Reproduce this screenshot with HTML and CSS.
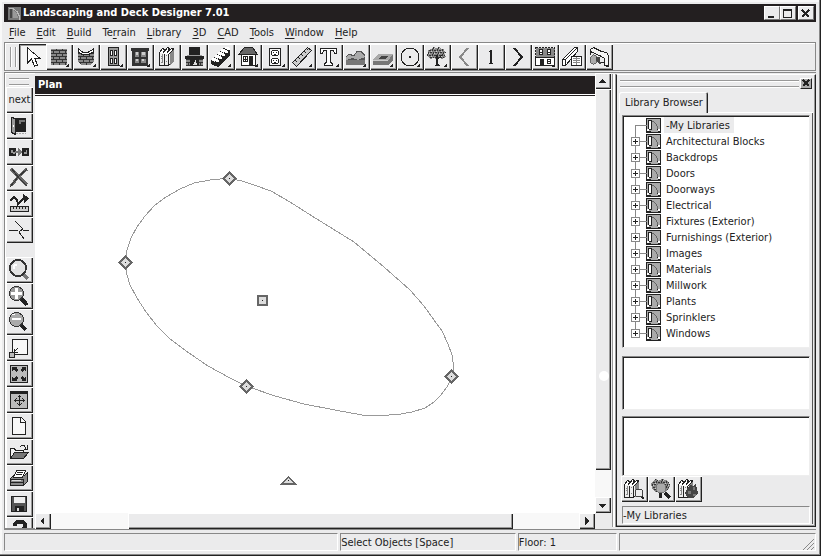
FILE: index.html
```html
<!DOCTYPE html>
<html lang="en">
<head>
<meta charset="utf-8">
<title>Landscaping and Deck Designer 7.01</title>
<link rel="stylesheet" href="styles.css">
</head>
<body>
<svg class="defs" aria-hidden="true">
  <defs>
    <pattern id="brick" width="6" height="6" patternUnits="userSpaceOnUse"><path fill="#888" d="M0 0h6v6H0z"/><path fill="#333" d="M0 0h6v1H0zM0 3h6v1H0zM1 0h1v3H1zM4 3h1v3H4z"/></pattern>
    <pattern id="leaf" width="5" height="5" patternUnits="userSpaceOnUse"><path fill="#888" d="M0 0h5v5H0z"/><path fill="#333" d="M0 1h2v1H0zM3 0h1v2H3zM1 3h2v1H1zM4 3h1v2H4z"/><path fill="#ccc" d="M2 2h1v1H2zM0 4h1v1H0z"/></pattern>
    <symbol id="corner" viewBox="0 0 27 26"><path fill="#222" d="M23 20v3h-3v-1h1v-1h1v-1z"/></symbol>
    <symbol id="lib" viewBox="0 0 15 15">
      <path fill="#222" d="M0 0h15v15H0z"/><path fill="#aaa" d="M1 1h13v13H1z"/>
      <path fill="#222" d="M2 2h4v10H2z"/><path fill="#fff" d="M3 3h2v8H3z"/>
      <path fill="#666" d="M6 3h2v1H6zM8 4h1v1H8zM9 5h1v1H9zM10 6h1v2h-1zM11 8h1v3h-1z"/>
      <path fill="#fff" d="M1 11h2v2H1zM12 11h2v2h-2z"/><path fill="#222" d="M1 13h4v1H1zM11 11h1v3h3v-1h-3z"/>
    </symbol>
    <symbol id="books" viewBox="0 0 27 26">
      <path fill="#eee" stroke="#222" d="M5.500 8.500h5v13h-5zM10.500 8.500h4v13h-4zM14.500 9.500l5-5v12l-5 5z"/>
      <path fill="#888" d="M16 9l4-4v12l-4 4z"/><path fill="#fff" stroke="#222" d="M5.500 8.500l3-4 2 1-1 3 4-5 2 1-2 4 4-4 2 1-5 5"/>
      <path stroke="#888" d="M7 12.500h2M7 14.500h2M7 18.500h2M12 11.500h1M12 17.500h1M8.500 10v9"/>
    </symbol>
  </defs>
</svg>

<div class="window">
  <header class="titlebar">
    <svg class="app-icon" width="13" height="13" viewBox="0 0 13 13"><path fill="#777" d="M0 0h13v13H0z"/><path fill="#444" d="M2 2h2v9H2z"/><path fill="none" stroke="#bbb" d="M1 1.500h4l4 3 2 4v4"/><path fill="#999" d="M5 3l4 3 1 5H5z"/></svg>
    <h1>Landscaping and Deck Designer 7.01</h1>
    <div class="captions">
      <button type="button" aria-label="Minimize"><svg width="15" height="13"><path fill="#222" d="M4 9h6v2H4z"/></svg></button>
      <button type="button" aria-label="Maximize"><svg width="15" height="13"><path fill="none" stroke="#222" d="M3.500 2.500h8v8h-8zM3 3.500h9"/></svg></button>
      <button type="button" class="close" aria-label="Close"><svg width="15" height="13"><path stroke="#222" stroke-width="2" d="M4 3l7 7M11 3l-7 7"/></svg></button>
    </div>
  </header>

  <nav class="menubar">
    <button type="button"><u>F</u>ile</button><button type="button"><u>E</u>dit</button><button type="button"><u>B</u>uild</button><button type="button">Te<u>r</u>rain</button><button type="button"><u>L</u>ibrary</button><button type="button"><u>3</u>D</button><button type="button"><u>C</u>AD</button><button type="button"><u>T</u>ools</button><button type="button"><u>W</u>indow</button><button type="button"><u>H</u>elp</button>
  </nav>

  <div class="toolbar">
    <span class="grip-v"></span>
    <button type="button" class="pressed" aria-label="Select Objects"><svg width="27" height="26"><path fill="#fff" stroke="#222" d="M8.500 4v15l4-4 3 7 3-1-3-7h5z"/></svg></button>
    <button type="button" aria-label="Wall"><svg width="27" height="26"><path fill="url(#brick)" d="M5 5h16v16H5z"/><use href="#corner"/></svg></button>
    <button type="button" aria-label="Curved Wall"><svg width="27" height="26"><path fill="url(#brick)" d="M5 8l4 2h7l5-3v11l-4 3h-8l-4-3z"/><path fill="#fff" stroke="#222" d="M5.500 5l4 3h6l5-3v3l-4 2h-8l-3-2z"/><use href="#corner"/></svg></button>
    <button type="button" aria-label="Door"><svg width="27" height="26"><path fill="#999" stroke="#222" d="M8.500 3.500h10v18h-10z"/><path fill="#fff" stroke="#222" d="M10.500 6.500h2v5h-2zM14.500 6.500h2v5h-2zM10.500 14.500h2v5h-2zM14.500 14.500h2v5h-2z"/><path fill="#222" d="M8 21h12v1H8z"/><use href="#corner"/></svg></button>
    <button type="button" aria-label="Window"><svg width="27" height="26"><path fill="#333" d="M4 4h18v3H4zM5 7h16v15H5z"/><path fill="#888" d="M8 8h4v5H8zM14 8h5v5h-5zM8 15h4v4H8zM14 15h5v4h-5z"/><path fill="#ccc" d="M9 8h2v3H9zM15 8h3v3h-3zM9 15h2v2H9zM15 15h2v2h-2z"/><use href="#corner"/></svg></button>
    <button type="button" aria-label="Cabinet"><svg width="27" height="26"><use href="#books"/></svg></button>
    <button type="button" aria-label="Fireplace"><svg width="27" height="26"><path fill="#222" d="M8 3h11v8H8z"/><path fill="#999" d="M6 11h15v1H6z"/><path fill="#222" d="M4 12h19v3H4z"/><path fill="url(#brick)" d="M5 15h17v7H5z"/><path fill="#222" d="M9 22v-7h9v7z"/><path fill="#ddd" d="M12 20h1v-2h1v-2h1v3h1v2h-4z"/></svg></button>
    <button type="button" aria-label="Stairs"><svg width="27" height="26"><path fill="#222" d="M3 16l7 3v4l-7-3zM10 19l3-2v3l-3 3zM6 13l7 3v4l-7-3zM13 16l3-2v3l-3 3zM9 10l7 3v4l-7-3zM16 13l3-2v3l-3 3zM12 7l7 3v4l-7-3zM19 10l3-2v3l-3 3zM15 4l7 2v5l-7-3z"/><path fill="#fff" d="M4 14h3l4 2v2H9l-5-2zM7 11h3l4 2v2h-2l-5-2zM10 8h3l4 2v2h-2l-5-2zM13 5h3l4 2v2h-2l-5-2zM17 3h3l2 1v2h-2l-3-1z"/><use href="#corner"/></svg></button>
    <button type="button" aria-label="Roof"><svg width="27" height="26"><path fill="#666" stroke="#222" d="M3.500 10.500l6-7h8l5 7z"/><path fill="#fff" stroke="#222" d="M6.500 10.500h14v11h-14zM8.500 12.500h4v5h-4zM10.500 12v6M8 15.500h5"/><path fill="#222" d="M14 12h4v10h-4z"/><use href="#corner"/></svg></button>
    <button type="button" aria-label="Electrical"><svg width="27" height="26"><path fill="#f4f4f4" stroke="#222" d="M7.500 4.500h11v17h-11z"/><rect x="9.500" y="6.500" width="7" height="5" rx="2" fill="#fff" stroke="#222"/><rect x="9.500" y="14.500" width="7" height="5" rx="2" fill="#fff" stroke="#222"/><path stroke="#222" d="M11.500 8v1M14.500 8v1M12 10.500h2M11.500 16v1M14.500 16v1M12 18.500h2"/><use href="#corner"/></svg></button>
    <button type="button" aria-label="Dimension"><svg width="27" height="26"><path fill="#ccc" stroke="#222" d="M3.500 18.500l15-15 4 3-15 16z"/><path stroke="#222" d="M6 16l2 2M9 13l2 2M12 10l2 2M15 7l2 2M18 5l1 1"/><use href="#corner"/></svg></button>
    <button type="button" aria-label="Text"><svg width="27" height="26"><path fill="#fff" stroke="#222" d="M4.500 4.500h16v5h-2l-1-3h-3v12l2 1v2h-8v-2l2-1v-12h-3l-1 3h-2z"/><use href="#corner"/></svg></button>
    <button type="button" aria-label="Terrain"><svg width="27" height="26"><path fill="#aaa" d="M3 12l3-2 5 1 3-4h4l3 3 1 2v9H3z"/><path fill="#555" d="M3 16l7-2 5 2 7-3v3H3z"/><path fill="#777" d="M3 16h19v5H3z"/><path fill="none" stroke="#555" d="M3 12.500l3-2 5 1 3-4h4l4 4"/><use href="#corner"/></svg></button>
    <button type="button" aria-label="Garden"><svg width="27" height="26"><path fill="#aaa" d="M3 15l6-5h14l-5 7H3z"/><path fill="#777" d="M3 17h15l5-7v6l-5 5H3z"/><path fill="#444" d="M8 15l3-3h7l-2 3z"/><path fill="#ccc" d="M3 16h15v1H3z"/><use href="#corner"/></svg></button>
    <button type="button" aria-label="Circle"><svg width="27" height="26"><circle cx="13" cy="13" r="9" fill="none" stroke="#222"/><path fill="#222" d="M12 12h2v2h-2z"/><use href="#corner"/></svg></button>
    <button type="button" aria-label="Plant"><svg width="27" height="26"><path fill="url(#leaf)" d="M4 6l3-1 2-2 3 1 3-1 2 2 3 0 0 2 2 1-1 3 1 2-4 2-3-1-3 1-3-1-3 1-2-3-2-1 2-2z"/><path fill="#222" d="M8 12l4 3v-4h2v3l3-3h1l-4 5v4l2 2h-6l2-2v-4z"/><use href="#corner"/></svg></button>
    <button type="button" aria-label="Down one floor"><svg width="27" height="26"><path fill="none" stroke="#888" stroke-width="2" d="M17 4l-8 9 8 9"/></svg></button>
    <button type="button" aria-label="Floor 1"><svg width="27" height="26"><path fill="#222" d="M11 7h1V6h2v13h1v1h-4v-1h1V8h-1z"/></svg></button>
    <button type="button" aria-label="Up one floor"><svg width="27" height="26"><path fill="none" stroke="#222" stroke-width="2" d="M9 4l8 9-8 9"/></svg></button>
    <button type="button" aria-label="Reference floor"><svg width="27" height="26"><path fill="#888" stroke="#222" stroke-dasharray="2 1" d="M3.500 3.500h19v10h-19z"/><path fill="#fff" stroke="#222" d="M3.500 13.500h19v8h-19zM7.500 5.500h3v5h-3zM15.500 5.500h3v5h-3zM15.500 15.500h3v4h-3zM7 8.500h4M15 8.500h4M15 17.500h4"/><path fill="#222" d="M8 15h4v7H8z"/><use href="#corner"/></svg></button>
    <button type="button" aria-label="Materials list"><svg width="27" height="26"><path fill="#fff" stroke="#222" d="M3.500 15.500l12-12h3v4l-12 14h-3zM3.500 15.500h3v6M6.500 15.500l12-12"/><path fill="#fff" stroke="#222" d="M12.500 12.500h10v9h-10z"/><path stroke="#888" d="M14 14.500h7M14 16.500h7M14 18.500h7M17.500 13v8"/></svg></button>
    <button type="button" aria-label="Camera"><svg width="27" height="26"><path fill="#f4f4f4" stroke="#222" d="M4.500 10.500v-5l3-2 8 4 5 1 2 3v10h-4v-7l-3-2-11-5"/><path fill="#aaa" stroke="#666" d="M4.500 13.500l3-3 3 2v6l-3 2-3-2z"/><path fill="#444" d="M10 13h4v3l1 4h-2l-3-3z"/><path stroke="#222" d="M15 18.500h3"/><use href="#corner"/></svg></button>
  </div>

  <main class="workspace">
    <aside class="sidebar" aria-label="Edit tools">
      <span class="grip-h"></span>
      <button type="button" class="word">next</button>
      <button type="button" aria-label="Open object"><svg width="26" height="26"><path fill="#222" d="M8 5h12v14H8z"/><path fill="#777" d="M13 7h6v2h-6zM13 9h2v2h-2z"/><path fill="#999" stroke="#222" d="M5.500 4.500l4 1v16l-4-2z"/><path stroke="#aaa" stroke-dasharray="2 1" d="M10 20.500h10"/><path fill="#fff" d="M7 12h1v2H7z"/></svg></button>
      <button type="button" aria-label="Replace"><svg width="26" height="26"><path fill="#222" d="M3 9h7v8H3zM16 9h7v8h-7z"/><path fill="#999" d="M5 11h2v3H5zM7 13h2v2H7zM18 13h2v2h-2zM20 11h1v4h-1z"/><path fill="#777" d="M9 12h3V9l5 4-5 4v-3H9z"/></svg></button>
      <button type="button" aria-label="Delete"><svg width="26" height="26"><path fill="none" stroke="#666" stroke-width="3" d="M5 4l6 6 10 10M21 4l-9 8-7 9"/><path fill="none" stroke="#333" d="M6 4l6 8 9 9M21 4l-9 8-8 10"/></svg></button>
      <button type="button" aria-label="Dimension edit"><svg width="26" height="26"><path fill="none" stroke="#222" stroke-width="2" d="M4 10l4-4 3 3 1 4 6-6"/><path fill="#222" d="M17 3l6 4-5 5z"/><path fill="#ccc" stroke="#222" d="M4.500 15.500h18v5h-18z"/><path stroke="#222" d="M7.500 16v2M10.500 16v2M13.500 16v2M16.500 16v2M19.500 16v2"/></svg></button>
      <button type="button" aria-label="Break line"><svg width="26" height="26"><path fill="none" stroke="#222" d="M9 4l8 8-4 3 5 7M3 13.500h9M17 13.500h6"/></svg></button>
      <span class="spacer"></span>
      <button type="button" aria-label="Zoom"><svg width="26" height="26"><path stroke="#777" stroke-width="4" d="M18 18l4 4"/><circle cx="12" cy="11" r="8" fill="#e2e2e2" stroke="#333" stroke-width="2"/><path fill="#fff" d="M8 7h3v2H9v3H7V8z"/></svg></button>
      <button type="button" aria-label="Zoom in"><svg width="26" height="26"><path stroke="#222" stroke-width="4" d="M15 15l6 7"/><circle cx="10.500" cy="10.500" r="7" fill="#999" stroke="#333"/><path fill="#fff" d="M9 5h3v4h4v3h-4v4H9v-4H5V9h4z"/></svg></button>
      <button type="button" aria-label="Zoom out"><svg width="26" height="26"><path stroke="#222" stroke-width="4" d="M14 15l6 6"/><circle cx="10.500" cy="10.500" r="7" fill="#aaa" stroke="#333"/><path fill="#fff" d="M6 9h9v2H6zM6 5h3v1H6z"/></svg></button>
      <button type="button" aria-label="Undo zoom"><svg width="26" height="26"><path fill="#f8f8f8" stroke="#222" d="M6.500 4.500h15v15h-15z"/><path fill="#bbb" stroke="#222" d="M3.500 17.500h5v5h-5z"/><path fill="none" stroke="#222" d="M12 13l-4 4M8.500 14v3.500h3"/></svg></button>
      <button type="button" aria-label="Fill window"><svg width="26" height="26"><path fill="#bbb" stroke="#222" d="M4.500 4.500h17v17h-17z"/><path fill="#222" d="M6 6h5l-1 1 2 2-2 2-2-2-2 1zM20 6h-5l1 1-2 2 2 2 2-2 2 1zM6 20h5l-1-1 2-2-2-2-2 2-2-1zM20 20h-5l1-1-2-2 2-2 2 2 2-1z"/></svg></button>
      <button type="button" aria-label="Pan window"><svg width="26" height="26"><path fill="#bbb" stroke="#222" d="M4.500 4.500h17v17h-17z"/><path fill="#222" d="M4 4h18v3H4z"/><path fill="none" stroke="#222" d="M13.500 8v11M8 13.500h11M11.500 10.500l2-2 2 2M11.500 16.500l2 2 2-2M10.500 11.500l-2 2 2 2M16.500 11.500l2 2-2 2"/></svg></button>
      <button type="button" aria-label="New"><svg width="26" height="26"><path fill="#f8f8f8" stroke="#222" d="M6.500 4.500h9l4 4v13h-13z"/><path fill="none" stroke="#222" d="M14.500 4v5h5"/></svg></button>
      <button type="button" aria-label="Open"><svg width="26" height="26"><path fill="#f4f4f4" stroke="#222" d="M4.500 19.500v-10h4l1 2h8v3"/><path fill="#777" stroke="#222" d="M4.500 19.500l4-6h14l-5 6z"/><path fill="none" stroke="#222" d="M14 7.500l2-1h2l2 3M21.500 6v4h-4"/></svg></button>
      <button type="button" aria-label="Print"><svg width="26" height="26"><path fill="#888" stroke="#222" d="M4.500 13.500l3-3h11l3-3v9l-4 4h-13z"/><path fill="#fff" stroke="#222" d="M7.500 12.500l3-7h9l-3 7z"/><path stroke="#222" d="M11 7.500h6M10 9.500h6M4 14.500h14M4 17.500h14M17.500 14v6"/><path fill="#ddd" d="M6 15h9v1H6z"/></svg></button>
      <button type="button" aria-label="Save"><svg width="26" height="26"><path fill="#555" stroke="#222" d="M5.500 5.500h15v15h-15z"/><path fill="#eee" d="M8 6h11v6H8z"/><path fill="#222" d="M9 15h9v6H9z"/><path fill="#ddd" d="M11 17h2v3h-2z"/></svg></button>
      <button type="button" aria-label="Help"><svg width="26" height="26"><path fill="none" stroke="#222" stroke-width="4" d="M9 9V7l2-2h6l2 2v4l-5 4v2"/></svg></button>
    </aside>

    <section class="plan">
      <h2>Plan</h2>
      <div class="canvas">
        <svg width="560" height="418" viewBox="35 96 560 418" role="img" aria-label="Plan outline">
          <path fill="none" stroke="#999" d="M229.500 178.500L242 181L254 185L271 191L290 202L312 216L354 242L384 267L410 290L424 306L434 320L442 331L448 344L452 355L453.500 366L453.500 374L447 387L440 396L434 402L425 408L412 412L398 414.500L380 415.500L365 415.500L340 411L304 404L275 396L246 386L230 378L208 366L189 353L170 339L157 326L146 312L137 298L130 285L127 275L125.500 262L127 250L131 238L137 227L145 216L154 206L166 197L180 189L194 183L210 180L220 179z"/>
          <g fill="#ddd" stroke="#666" stroke-width="2">
            <path d="M229.500 172.500l6 6-6 6-6-6zM125.500 256.500l6 6-6 6-6-6zM451.500 370.500l6 6-6 6-6-6zM246.500 380.500l6 6-6 6-6-6zM258 296h9v9h-9zM288.500 477l7 7h-14z"/>
          </g>
          <path fill="#222" d="M229 178h1v1h-1zM125 262h1v1h-1zM451 376h1v1h-1zM246 386h1v1h-1zM262 300h1v1h-1zM288 480h1v1h-1z"/>
        </svg>
      </div>
      <div class="hscroll">
        <button type="button" aria-label="Scroll left"><svg width="15" height="15"><path fill="#222" d="M9 3v8L5 7z"/></svg></button>
        <div class="track"><div class="thumb"></div></div>
        <button type="button" aria-label="Scroll right"><svg width="15" height="15"><path fill="#222" d="M6 3v8l4-4z"/></svg></button>
      </div>
    </section>

    <div class="vscroll">
      <button type="button" aria-label="Scroll up"><svg width="15" height="15"><path fill="#222" d="M3 9h8L7 5z"/></svg></button>
      <div class="track"><div class="thumb"></div></div>
      <button type="button" aria-label="Scroll down"><svg width="15" height="15"><path fill="#222" d="M3 6h8l-4 4z"/></svg></button>
    </div>

    <aside class="library">
      <div class="dock-head"><span class="grip-h"></span><button type="button" aria-label="Close library"><svg width="9" height="9"><path stroke="#222" stroke-width="2" d="M2 1l6 6M8 1L2 7"/></svg></button></div>
      <div class="tabs"><button type="button" class="tab">Library Browser</button><span class="tab-rest"></span></div>
      <div class="pane">
        <ul class="tree">
          <li class="root"><svg width="15" height="15"><use href="#lib"/></svg><span class="selected">-My Libraries</span></li>
          <li><button type="button" aria-label="Expand"></button><svg width="15" height="15"><use href="#lib"/></svg><span>Architectural Blocks</span></li>
          <li><button type="button" aria-label="Expand"></button><svg width="15" height="15"><use href="#lib"/></svg><span>Backdrops</span></li>
          <li><button type="button" aria-label="Expand"></button><svg width="15" height="15"><use href="#lib"/></svg><span>Doors</span></li>
          <li><button type="button" aria-label="Expand"></button><svg width="15" height="15"><use href="#lib"/></svg><span>Doorways</span></li>
          <li><button type="button" aria-label="Expand"></button><svg width="15" height="15"><use href="#lib"/></svg><span>Electrical</span></li>
          <li><button type="button" aria-label="Expand"></button><svg width="15" height="15"><use href="#lib"/></svg><span>Fixtures (Exterior)</span></li>
          <li><button type="button" aria-label="Expand"></button><svg width="15" height="15"><use href="#lib"/></svg><span>Furnishings (Exterior)</span></li>
          <li><button type="button" aria-label="Expand"></button><svg width="15" height="15"><use href="#lib"/></svg><span>Images</span></li>
          <li><button type="button" aria-label="Expand"></button><svg width="15" height="15"><use href="#lib"/></svg><span>Materials</span></li>
          <li><button type="button" aria-label="Expand"></button><svg width="15" height="15"><use href="#lib"/></svg><span>Millwork</span></li>
          <li><button type="button" aria-label="Expand"></button><svg width="15" height="15"><use href="#lib"/></svg><span>Plants</span></li>
          <li><button type="button" aria-label="Expand"></button><svg width="15" height="15"><use href="#lib"/></svg><span>Sprinklers</span></li>
          <li><button type="button" aria-label="Expand"></button><svg width="15" height="15"><use href="#lib"/></svg><span>Windows</span></li>
        </ul>
        <div class="preview"></div>
        <div class="preview tall"></div>
        <div class="lib-buttons">
          <button type="button" aria-label="Search library"><svg width="27" height="26"><g transform="translate(-2 0)"><use href="#books"/></g><path stroke="#222" stroke-width="2" d="M19 19l4 4"/><circle cx="18" cy="17" r="4" fill="#eee" stroke="#444"/></svg></button>
          <button type="button" aria-label="Plant search"><svg width="27" height="26"><path fill="url(#leaf)" d="M3 7l4-4 4 1 4-1 5 2 2 4-1 4-4 3H7l-3-3z"/><path stroke="#222" stroke-width="3" d="M17 17l5 5M12 16v6"/><circle cx="13" cy="12" r="5" fill="#aaa" stroke="#777"/></svg></button>
          <button type="button" aria-label="Plant library"><svg width="27" height="26"><g transform="translate(-2 0)"><use href="#books"/></g><path fill="#444" d="M12 13l3-4 3 1 3-2 1 5 1 4-4 5h-6l-3-5z"/><path fill="#777" d="M13 15h3v3h-3zM18 11h2v3h-2zM18 18h3v2h-3z"/></svg></button>
        </div>
        <div class="path">-My Libraries</div>
      </div>
    </aside>
  </main>

  <footer class="statusbar">
    <div></div><div>Select Objects [Space]</div><div>Floor: 1</div>
    <div class="last"><svg width="13" height="13"><path stroke="#888" stroke-width="1" d="M1 13L12 2M5 13l7-7M9 13l3-3"/></svg></div>
  </footer>
</div>
</body>
</html>
```

FILE: styles.css
```css
* { box-sizing: border-box; }
html, body { height: 100%; }
body {
  margin: 0;
  background: #ebebec;
  color: #222;
  font: 11px/18px "DejaVu Sans Condensed", "DejaVu Sans", sans-serif;
  overflow: hidden;
}
button {
  font: inherit;
  color: inherit;
  background: #ebebec;
  border: 0;
  border-radius: 0;
  padding: 0;
  margin: 0;
}
svg { display: block; flex: none; shape-rendering: crispEdges; }
ul { list-style: none; margin: 0; padding: 0; }
h1, h2 {
  margin: 0;
  font-size: 11px;
  font-weight: bold;
  color: #fff;
}
.defs { position: absolute; width: 0; height: 0; }

.window {
  height: 100vh;
  display: flex;
  flex-direction: column;
  padding: 4px;
  border-right: 1px solid #222;
  border-bottom: 1px solid #222;
  box-shadow: inset -1px -1px #888, inset 2px 2px #f8f8f8;
}

.titlebar {
  display: flex;
  align-items: center;
  height: 18px;
  flex: none;
  background: #231f20;
  padding: 0 2px 0 4px;
}
.titlebar h1 { flex: 1; margin-left: 2px; }
.captions { display: flex; }
.captions button, .dock-head button {
  background: #ebebec;
  border: 1px solid #fff;
  border-right-color: #777;
  border-bottom-color: #777;
}
.captions button { width: 16px; height: 14px; }
.captions svg { margin: -1px; }
.captions .close { margin-left: 2px; }

.menubar { display: flex; height: 20px; flex: none; padding-top: 1px; }
.menubar button { padding: 0 6px 0 5px; background: none; }
u { text-underline-offset: 2px; }

.toolbar {
  display: flex;
  height: 29px;
  flex: none;
  border: 1px solid #888;
  padding: 1px 0 0 3px;
  box-shadow: inset 1px 1px #fff;
}
.grip-v {
  width: 6px;
  height: 20px;
  margin: 3px 3px 0 2px;
  border: 1px solid #999;
  border-width: 0 1px;
  box-shadow: inset 1px 0 #fff, 1px 0 #fff;
  flex: none;
}
.toolbar button, .lib-buttons button {
  width: 27px;
  height: 26px;
  flex: none;
  box-shadow: inset 1px 1px #fff, inset -1px -1px #222, inset -2px -2px #999;
}
.toolbar .pressed {
  background: #f4f4f4;
  box-shadow: inset 1px 1px #222, inset 2px 2px #999;
}

.workspace {
  display: flex;
  flex: 1;
  min-height: 0;
  margin-top: 1px;
  border-top: 1px solid #888;
  border-bottom: 1px solid #888;
  border-left: 1px solid #888;
}

.sidebar {
  display: flex;
  flex-direction: column;
  width: 30px;
  flex: none;
  padding: 0 3px 0 1px;
  overflow: hidden;
  border-bottom: 1px solid #888;
  box-shadow: inset 1px 1px #fff;
}
.grip-h {
  height: 7px;
  border: 1px solid #999;
  border-width: 1px 0;
  box-shadow: inset 0 1px #fff, 0 1px #fff;
}
.sidebar .grip-h { margin: 5px 3px 2px 3px; flex: none; }
.sidebar button {
  width: 27px;
  height: 26px;
  flex: none;
  box-shadow: inset 1px 1px #fff, inset -1px -1px #222, inset -2px -2px #999;
}
.sidebar .word { text-align: center; }
.spacer { height: 14px; flex: none; }

.plan {
  flex: 1;
  min-width: 0;
  display: flex;
  flex-direction: column;
  padding-top: 3px;
}
.plan h2 {
  height: 20px;
  flex: none;
  padding-left: 3px;
  background: #231f20;
  box-shadow: inset 0 -1px #231f20, inset 0 -2px #fff;
}
.canvas { flex: 1; min-height: 0; background: #fff; overflow: hidden; }

.hscroll { display: flex; height: 16px; flex: none; }
.vscroll { display: flex; flex-direction: column; width: 16px; flex: none; margin-bottom: 16px; }
.track { background: #f8f8f8; }
.hscroll button, .vscroll button, .thumb {
  background: #ebebec;
  box-shadow: inset 1px 1px #fff, inset -1px -1px #222, inset -2px -2px #999;
}
.hscroll button, .vscroll button { width: 16px; height: 16px; flex: none; }
.hscroll .track { flex: 1; padding: 0 66px 0 77px; }
.hscroll .thumb { height: 16px; }
.vscroll .track { flex: 1; padding-bottom: 27px; }
.vscroll .thumb { height: 100%; position: relative; }
.vscroll .thumb::after {
  content: "";
  position: absolute;
  left: 4px;
  bottom: 89px;
  width: 10px;
  height: 10px;
  border-radius: 50%;
  background: #fff;
}

.library {
  display: flex;
  flex-direction: column;
  width: 200px;
  flex: none;
  margin: 1px 0 2px 5px;
  border: 1px solid #222;
  border-top-color: #fff;
  box-shadow: -1px 0 #999, -3px 0 #fff, -4px 0 #999, inset -1px -1px #999;
  padding: 2px;
}
.dock-head { display: flex; align-items: center; gap: 1px; height: 12px; flex: none; padding: 0 1px; }
.dock-head .grip-h { flex: 1; }
.dock-head button { width: 12px; height: 11px; background: #aaa; border-right-color: #222; border-bottom-color: #222; }
.tabs { display: flex; height: 21px; flex: none; margin-top: 3px; }
.tab {
  padding: 0 5px 0 6px;
  border-radius: 2px 2px 0 0;
  box-shadow: inset 1px 1px #fff, inset -1px 0 #222, inset -2px 0 #999;
}
.tab-rest { flex: 1; border-bottom: 1px solid #fff; }
.pane {
  flex: 1;
  min-height: 0;
  display: flex;
  flex-direction: column;
  padding: 2px 2px 0 3px;
  box-shadow: inset -1px 0 #555;
}
.tree, .preview {
  background: #fff;
  border: 1px solid #888;
  border-right-color: #eee;
  border-bottom-color: #eee;
  box-shadow: inset 1px 1px #222;
  margin-right: 1px;
}
.tree { flex: 1; min-height: 0; overflow: hidden; padding: 1px 0 0 8px; }
.tree li { display: flex; align-items: center; height: 16px; line-height: 16px; position: relative; padding-left: 15px; }
.tree li::before {
  content: "";
  position: absolute;
  left: 4px;
  top: 0;
  bottom: 0;
  width: 11px;
  border-left: 1px solid #888;
  background: linear-gradient(#888, #888) 0 8px / 100% 1px no-repeat;
}
.tree .root::before { top: 8px; background-position: 0 0; }
.tree li:last-child::before { bottom: 7px; }
.tree li button {
  position: absolute;
  left: 0;
  top: 4px;
  width: 9px;
  height: 9px;
  border: 1px solid #888;
  background:
    linear-gradient(#222, #222) 1px 3px / 5px 1px no-repeat,
    linear-gradient(#222, #222) 3px 1px / 1px 5px no-repeat,
    #fff;
}
.tree span { height: 16px; margin-left: 3px; padding: 1px 2px 0 2px; white-space: nowrap; }
.tree .selected { background: #ebebec; padding-right: 4px; }
.preview { height: 54px; flex: none; margin-top: 8px; }
.preview.tall { height: 60px; margin-top: 6px; }
.lib-buttons { display: flex; flex: none; margin: 0 0 4px -1px; }
.path {
  height: 18px;
  flex: none;
  margin-right: 1px;
  border: 1px solid #888;
  border-right-color: #fff;
  border-bottom-color: #fff;
}

.statusbar {
  display: grid;
  grid-template-columns: 335fr 176fr 100fr 197fr;
  gap: 2px;
  height: 18px;
  flex: none;
  margin-top: 3px;
}
.statusbar div {
  border: 1px solid #888;
  border-right-color: #fff;
  border-bottom-color: #fff;
  white-space: nowrap;
  overflow: hidden;
}
.statusbar .last { display: flex; justify-content: flex-end; align-items: flex-end; }
```
